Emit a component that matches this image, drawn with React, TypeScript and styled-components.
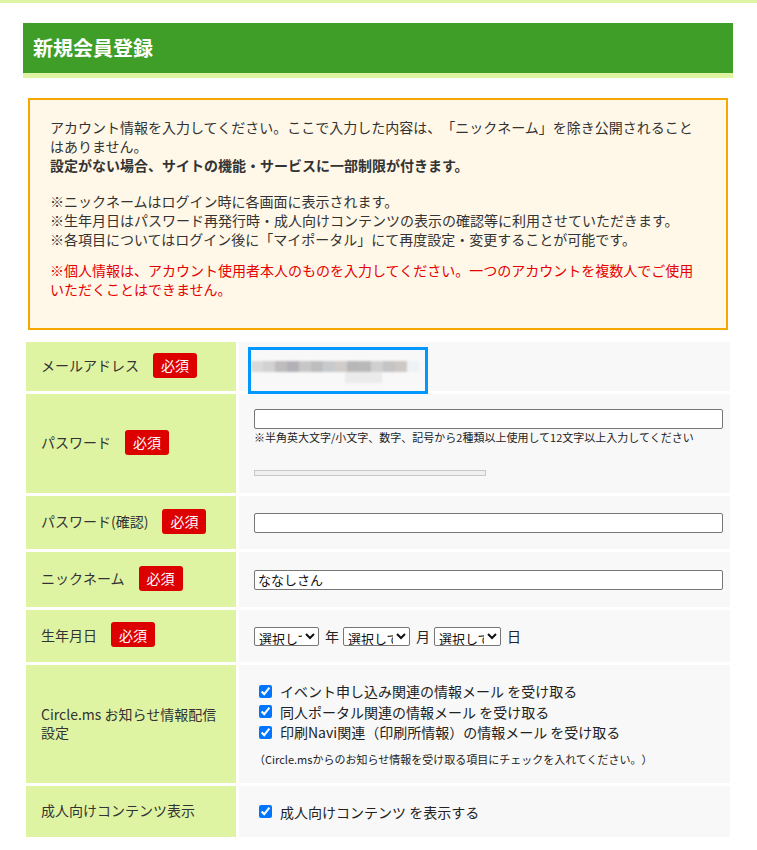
import React from "react";
import styled, { createGlobalStyle } from "styled-components";

const GlobalStyle = createGlobalStyle`
  * {
    box-sizing: border-box;
  }
  body {
    margin: 0;
    border-top: 3px solid #dff4a3;
    background: #fff;
    color: #333;
    font-family: "Noto Sans CJK JP", "Liberation Sans", sans-serif;
    font-size: 14px;
    text-spacing-trim: space-all;
  }
`;

const Page = styled.div`
  width: 710px;
  margin: 20px 0 0 23px;
`;

const Header = styled.div`
  height: 55px;
  display: flex;
  align-items: center;
  padding: 0 10px;
  background: #3f9e27;
  border-bottom: 5px solid #dff4a3;
`;

const Title = styled.h1`
  margin: 0;
  color: #fff;
  font-size: 20px;
  font-weight: bold;
  line-height: 1;
`;

const Notice = styled.div`
  margin: 20px 5px 0;
  padding: 18px 20px 29px;
  border: 2px solid #f5a800;
  background: #fff8e8;
  font-size: 14px;
  line-height: 19px;
`;

const NoticePara = styled.p<{ $gap?: number; $red?: boolean }>`
  margin: ${(p) => p.$gap || 0}px 0 0;
  color: ${(p) => (p.$red ? "#e60000" : "#333")};
`;

const Table = styled.table`
  width: 710px;
  margin-top: 9px;
  border-collapse: separate;
  border-spacing: 3px;
`;

const LabelCell = styled.th`
  width: 210px;
  padding: 0 8px 3px 15px;
  background: #dff4a3;
  text-align: left;
  font-weight: normal;
  font-size: 14px;
  line-height: 18px;
  vertical-align: middle;
`;

const LabelInner = styled.div`
  display: flex;
  align-items: center;
  gap: 14px;
`;

const Badge = styled.span`
  display: inline-flex;
  align-items: center;
  justify-content: center;
  width: 44px;
  height: 25px;
  border-radius: 3px;
  background: #dd0000;
  color: #fff;
  font-size: 14px;
`;

const ValueCell = styled.td<{ $top?: number }>`
  padding: ${(p) => (p.$top !== undefined ? `${p.$top}px` : "0")} 7px 0 15px;
  background: #f8f8f8;
  vertical-align: ${(p) => (p.$top !== undefined ? "top" : "middle")};
  font-size: 14px;
`;

const Overlay = styled.div`
  position: relative;
  height: 1px;
`;

const Redacted = styled.div`
  position: absolute;
  left: -6px;
  top: -19px;
  width: 180px;
  height: 47px;
  border: 3px solid #0098ff;
`;

const TextInput = styled.input`
  display: block;
  width: 469px;
  height: 20px;
  padding: 0 3px;
  border: 1px solid #767676;
  border-radius: 2px;
  background: #fff;
  font-family: "Noto Sans CJK JP", sans-serif;
  font-size: 13px;
  color: #111;
`;

const Hint = styled.div`
  font-size: 11px;
  line-height: 16px;
  color: #222;
  white-space: nowrap;
`;

const StrengthBar = styled.div`
  width: 232px;
  height: 6px;
  margin-top: 25px;
  border: 1px solid #c8c8c8;
  background: #f0f0f0;
`;

const DateRow = styled.div`
  display: flex;
  align-items: center;
  gap: 6px;
`;

const Select = styled.select<{ $w: number }>`
  width: ${(p) => p.$w}px;
  height: 19px;
  padding: 0;
  border: 1px solid #767676;
  border-radius: 2px;
  background: #fff;
  font-family: "Noto Sans CJK JP", sans-serif;
  font-size: 13px;
  color: #111;
`;

const Unit = styled.span`
  margin-right: -2px;
  font-size: 14px;
  color: #222;
`;

const CheckLine = styled.label`
  display: flex;
  align-items: center;
  height: 20.5px;
  font-size: 14px;
  color: #222;

  input {
    width: 13px;
    height: 13px;
    margin: 0 8px 0 5px;
    accent-color: #0075ff;
  }
`;

const Note = styled.div`
  margin-top: 8px;
  font-size: 11px;
  line-height: 16px;
  color: #222;
`;

const blurCells = [
  "#dadada", "#d2d2d2", "#bebcbc", "#b3b1b7", "#c8c6c6", "#bdbdbf", "#c7cacc",
  "#d0ccca", "#b7b7b7", "#b9b9b9", "#d0d0d0", "#c4c4c4", "#cdc8c4", "#eef2f6",
];

const BlurredEmail = () => (
  <svg width="174" height="41" style={{ position: "absolute", left: 0, top: 0 }}>
    <defs>
      <filter id="bl">
        <feGaussianBlur stdDeviation="1.2" />
      </filter>
    </defs>
    <g filter="url(#bl)">
      {blurCells.map((c, i) => (
        <rect key={i} x={i * 12} y={11} width={12.5} height={11} fill={c} />
      ))}
      <rect x={94} y={22} width={37} height={11} fill="#ebebeb" />
    </g>
  </svg>
);

const rows = [49, 99, 53, 55, 52, 118, 51];

const App: React.FC = () => {
  return (
    <>
      <GlobalStyle />
      <Page>
        <Header>
          <Title>新規会員登録</Title>
        </Header>

        <Notice>
          <NoticePara>
            アカウント情報を入力してください。ここで入力した内容は、「ニックネーム」を除き公開されることはありません。
            <br />
            <b>設定がない場合、サイトの機能・サービスに一部制限が付きます。</b>
          </NoticePara>
          <NoticePara $gap={17}>
            ※ニックネームはログイン時に各画面に表示されます。
            <br />
            ※生年月日はパスワード再発行時・成人向けコンテンツの表示の確認等に利用させていただきます。
            <br />
            ※各項目についてはログイン後に「マイポータル」にて再度設定・変更することが可能です。
          </NoticePara>
          <NoticePara $gap={12} $red>
            ※個人情報は、アカウント使用者本人のものを入力してください。一つのアカウントを複数人でご使用いただくことはできません。
          </NoticePara>
        </Notice>

        <Table>
          <tbody>
            <tr style={{ height: rows[0] }}>
              <LabelCell>
                <LabelInner>
                  メールアドレス<Badge>必須</Badge>
                </LabelInner>
              </LabelCell>
              <ValueCell>
                <Overlay>
                  <Redacted>
                    <BlurredEmail />
                  </Redacted>
                </Overlay>
              </ValueCell>
            </tr>

            <tr style={{ height: rows[1] }}>
              <LabelCell>
                <LabelInner>
                  パスワード<Badge>必須</Badge>
                </LabelInner>
              </LabelCell>
              <ValueCell $top={15}>
                <TextInput type="password" />
                <Hint>※半角英大文字/小文字、数字、記号から2種類以上使用して12文字以上入力してください</Hint>
                <StrengthBar />
              </ValueCell>
            </tr>

            <tr style={{ height: rows[2] }}>
              <LabelCell>
                <LabelInner>
                  パスワード(確認)<Badge>必須</Badge>
                </LabelInner>
              </LabelCell>
              <ValueCell>
                <TextInput type="password" />
              </ValueCell>
            </tr>

            <tr style={{ height: rows[3] }}>
              <LabelCell>
                <LabelInner>
                  ニックネーム<Badge>必須</Badge>
                </LabelInner>
              </LabelCell>
              <ValueCell>
                <TextInput type="text" defaultValue="ななしさん" />
              </ValueCell>
            </tr>

            <tr style={{ height: rows[4] }}>
              <LabelCell>
                <LabelInner>
                  生年月日<Badge>必須</Badge>
                </LabelInner>
              </LabelCell>
              <ValueCell>
                <DateRow>
                  <Select $w={65}>
                    <option>選択してください</option>
                  </Select>
                  <Unit>年</Unit>
                  <Select $w={67}>
                    <option>選択してください</option>
                  </Select>
                  <Unit>月</Unit>
                  <Select $w={67}>
                    <option>選択してください</option>
                  </Select>
                  <Unit>日</Unit>
                </DateRow>
              </ValueCell>
            </tr>

            <tr style={{ height: rows[5] }}>
              <LabelCell>Circle.ms お知らせ情報配信設定</LabelCell>
              <ValueCell $top={16}>
                <CheckLine>
                  <input type="checkbox" defaultChecked />
                  イベント申し込み関連の情報メール を受け取る
                </CheckLine>
                <CheckLine>
                  <input type="checkbox" defaultChecked />
                  同人ポータル関連の情報メール を受け取る
                </CheckLine>
                <CheckLine>
                  <input type="checkbox" defaultChecked />
                  印刷Navi関連（印刷所情報）の情報メール を受け取る
                </CheckLine>
                <Note>（Circle.msからのお知らせ情報を受け取る項目にチェックを入れてください。）</Note>
              </ValueCell>
            </tr>

            <tr style={{ height: rows[6] }}>
              <LabelCell>成人向けコンテンツ表示</LabelCell>
              <ValueCell>
                <CheckLine>
                  <input type="checkbox" defaultChecked />
                  成人向けコンテンツ を表示する
                </CheckLine>
              </ValueCell>
            </tr>
          </tbody>
        </Table>
      </Page>
    </>
  );
};

export default App;
